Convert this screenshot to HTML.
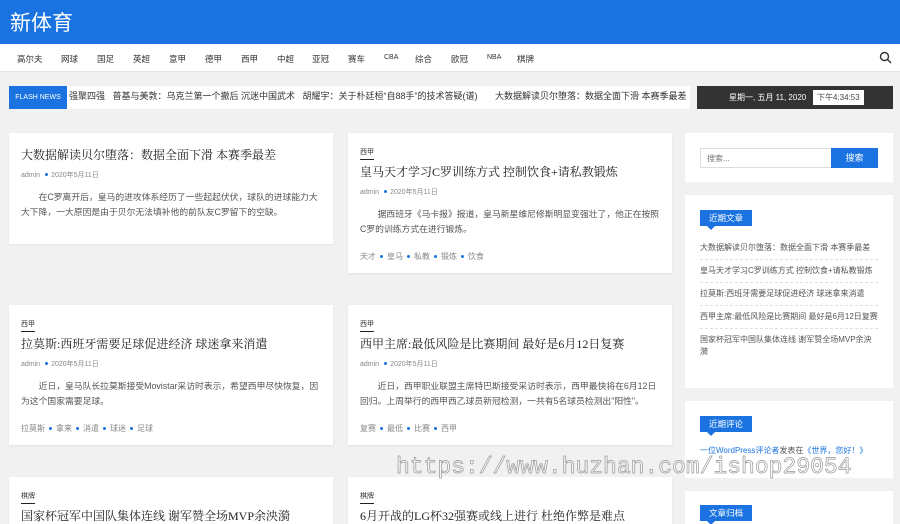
<!DOCTYPE html><html style="width:900px;height:524px;overflow:hidden"><head><meta charset="utf-8"><style>
*{margin:0;padding:0;box-sizing:border-box}
body{width:900px;height:524px;overflow:hidden;background:#f1f1f1;font-family:"Liberation Sans","Noto Sans CJK SC",sans-serif;color:#333;position:relative}
.hd{position:absolute;left:0;top:0;width:900px;height:44px;background:#1a73e0}
.hd h1{position:absolute;left:10px;top:7px;font-size:21px;font-weight:normal;color:#fff}
.nav{position:absolute;top:44px;left:0;width:900px;height:28px;background:#fff;border-bottom:1px solid #e4e4e4}
.nav span{position:absolute;top:9px;font-size:8.5px;color:#333}
.flash{position:absolute;left:9px;top:86px;width:681px;height:23px;background:#fff}
.flash .lb{position:absolute;left:0;top:0;width:58px;height:23px;background:#1a73e0;color:#fff;font-size:7px;line-height:23px;text-align:center}
.flash .tx{position:absolute;left:60px;top:0;width:620px;overflow:hidden;white-space:nowrap;font-size:9px;line-height:21px;color:#333}
.date{position:absolute;left:697px;top:86px;width:196px;height:23px;background:#333;color:#fff;font-size:8px}
.date .d{position:absolute;left:32px;top:6px}
.date .t{position:absolute;left:116px;top:4px;background:#fff;color:#444;padding:1px 4px;font-size:8px;height:15px;line-height:13px}
.card{position:absolute;background:#fff;box-shadow:0 1px 2px rgba(0,0,0,.06)}
.cat{position:absolute;left:12px;font-size:7px;color:#333;border-bottom:1px solid #222;padding-bottom:2px}
.tt{position:absolute;left:12px;font-family:"Liberation Serif","Noto Serif CJK SC",serif;font-size:12px;color:#222;white-space:nowrap}
.meta{position:absolute;left:12px;font-size:7px;color:#888}
.meta i{display:inline-block;width:3px;height:3px;border-radius:50%;background:#1a73e0;margin:0 3px 1px 5px;vertical-align:middle}
.ex{position:absolute;left:12px;right:12px;font-size:8.8px;line-height:15px;color:#555;text-indent:2em}
.tags{position:absolute;left:12px;font-size:8px;color:#888}
.tags i{display:inline-block;width:3px;height:3px;border-radius:50%;background:#1a73e0;margin:0 4px 1px;vertical-align:middle}
.w{position:absolute;left:685px;width:208px;background:#fff}
.wt{position:absolute;left:15px;background:#1a73e0;color:#fff;font-size:8.5px;padding:0 9px;height:16px;line-height:16px}
.wt:after{content:"";position:absolute;left:7px;bottom:-4px;border:4px solid transparent;border-bottom:0;border-top-color:#1a73e0}
.rl{position:absolute;left:15px;width:178px;font-size:8px;color:#555;line-height:12px}
.rl div{border-bottom:1px dashed #e0e0e0;padding:5px 0}
.wm{position:absolute;left:396px;top:454px;font-family:"Liberation Mono",monospace;font-size:23px;color:rgba(255,255,255,.3);-webkit-text-stroke:.7px #999;white-space:nowrap}
</style></head><body>
<div class="hd"><h1>新体育</h1></div>
<div class="nav">
<span style="left:17px">高尔夫</span><span style="left:61px">网球</span><span style="left:97px">国足</span><span style="left:133px">英超</span><span style="left:169px">意甲</span><span style="left:205px">德甲</span><span style="left:241px">西甲</span><span style="left:277px">中超</span><span style="left:312px">亚冠</span><span style="left:348px">赛车</span><span style="left:384px;font-size:7px;top:10px">CBA</span><span style="left:415px">综合</span><span style="left:451px">欧冠</span><span style="left:487px;font-size:7px;top:10px">NBA</span><span style="left:517px">棋牌</span>
<svg style="position:absolute;left:879px;top:7px" width="13" height="13" viewBox="0 0 13 13"><circle cx="5.5" cy="5.5" r="4" fill="none" stroke="#333" stroke-width="1.4"/><path d="M8.5 8.5L12 12" stroke="#333" stroke-width="1.5"/></svg>
</div>
<div class="flash"><div class="lb">FLASH NEWS</div><div class="tx">强聚四强 &nbsp; 普基与美敦：乌克兰第一个撤后 沉迷中国武术 &nbsp; 胡耀宇：关于朴廷桓“自88手”的技术答疑(谱) &nbsp; &nbsp; &nbsp; 大数据解读贝尔堕落：数据全面下滑 本赛季最差</div></div>
<div class="date"><span class="d">星期一, 五月 11, 2020</span><span class="t">下午4:34:53</span></div>

<div class="card" style="left:9px;top:133px;width:324px;height:111px">
<div class="tt" style="top:13px">大数据解读贝尔堕落：数据全面下滑 本赛季最差</div>
<div class="meta" style="top:37px">admin<i></i>2020年5月11日</div>
<div class="ex" style="top:57px">在C罗离开后，皇马的进攻体系经历了一些起起伏伏，球队的进球能力大大下降，一大原因是由于贝尔无法填补他的前队友C罗留下的空缺。</div>
</div>
<div class="card" style="left:348px;top:133px;width:324px;height:140px">
<div class="cat" style="top:14px">西甲</div>
<div class="tt" style="top:30px">皇马天才学习C罗训练方式 控制饮食+请私教锻炼</div>
<div class="meta" style="top:54px">admin<i></i>2020年5月11日</div>
<div class="ex" style="top:74px">据西班牙《马卡报》报道，皇马新星维尼修斯明显变强壮了，他正在按照C罗的训练方式在进行锻炼。</div>
<div class="tags" style="top:118px">天才<i></i>皇马<i></i>私教<i></i>锻炼<i></i>饮食</div>
</div>
<div class="card" style="left:9px;top:305px;width:324px;height:140px">
<div class="cat" style="top:14px">西甲</div>
<div class="tt" style="top:30px">拉莫斯:西班牙需要足球促进经济 球迷拿来消遣</div>
<div class="meta" style="top:54px">admin<i></i>2020年5月11日</div>
<div class="ex" style="top:74px">近日，皇马队长拉莫斯接受Movistar采访时表示，希望西甲尽快恢复，因为这个国家需要足球。</div>
<div class="tags" style="top:118px">拉莫斯<i></i>拿来<i></i>消遣<i></i>球迷<i></i>足球</div>
</div>
<div class="card" style="left:348px;top:305px;width:324px;height:140px">
<div class="cat" style="top:14px">西甲</div>
<div class="tt" style="top:30px">西甲主席:最低风险是比赛期间 最好是6月12日复赛</div>
<div class="meta" style="top:54px">admin<i></i>2020年5月11日</div>
<div class="ex" style="top:74px">近日，西甲职业联盟主席特巴斯接受采访时表示，西甲最快将在6月12日回归。上周举行的西甲西乙球员新冠检测，一共有5名球员检测出"阳性"。</div>
<div class="tags" style="top:118px">复赛<i></i>最低<i></i>比赛<i></i>西甲</div>
</div>
<div class="card" style="left:9px;top:477px;width:324px;height:60px">
<div class="cat" style="top:14px">棋牌</div>
<div class="tt" style="top:30px">国家杯冠军中国队集体连线 谢军赞全场MVP余泱漪</div>
</div>
<div class="card" style="left:348px;top:477px;width:324px;height:60px">
<div class="cat" style="top:14px">棋牌</div>
<div class="tt" style="top:30px">6月开战的LG杯32强赛或线上进行 杜绝作弊是难点</div>
</div>

<div class="w" style="top:133px;height:49px">
<div style="position:absolute;left:15px;top:15px;width:132px;height:20px;border:1px solid #ddd;font-size:8px;color:#777;padding:4px 6px">搜索...</div>
<div style="position:absolute;left:146px;top:15px;width:47px;height:20px;background:#1a73e0;color:#fff;font-size:9px;text-align:center;line-height:20px">搜索</div>
</div>
<div class="w" style="top:195px;height:193px">
<div class="wt" style="top:15px">近期文章</div>
<div class="rl" style="top:42px"><div>大数据解读贝尔堕落：数据全面下滑 本赛季最差</div><div>皇马天才学习C罗训练方式 控制饮食+请私教锻炼</div><div>拉莫斯:西班牙需要足球促进经济 球迷拿来消遣</div><div>西甲主席:最低风险是比赛期间 最好是6月12日复赛</div><div style="border:0">国家杯冠军中国队集体连线 谢军赞全场MVP余泱漪</div></div>
</div>
<div class="w" style="top:401px;height:77px">
<div class="wt" style="top:15px">近期评论</div>
<div class="rl" style="top:44px;color:#1a73e0">一位WordPress评论者<span style="color:#555">发表在</span>《世界，您好！》</div>
</div>
<div class="w" style="top:491px;height:40px">
<div class="wt" style="top:14px">文章归档</div>
</div>
<div class="wm">https://www.huzhan.com/ishop29054</div>
</body></html>
